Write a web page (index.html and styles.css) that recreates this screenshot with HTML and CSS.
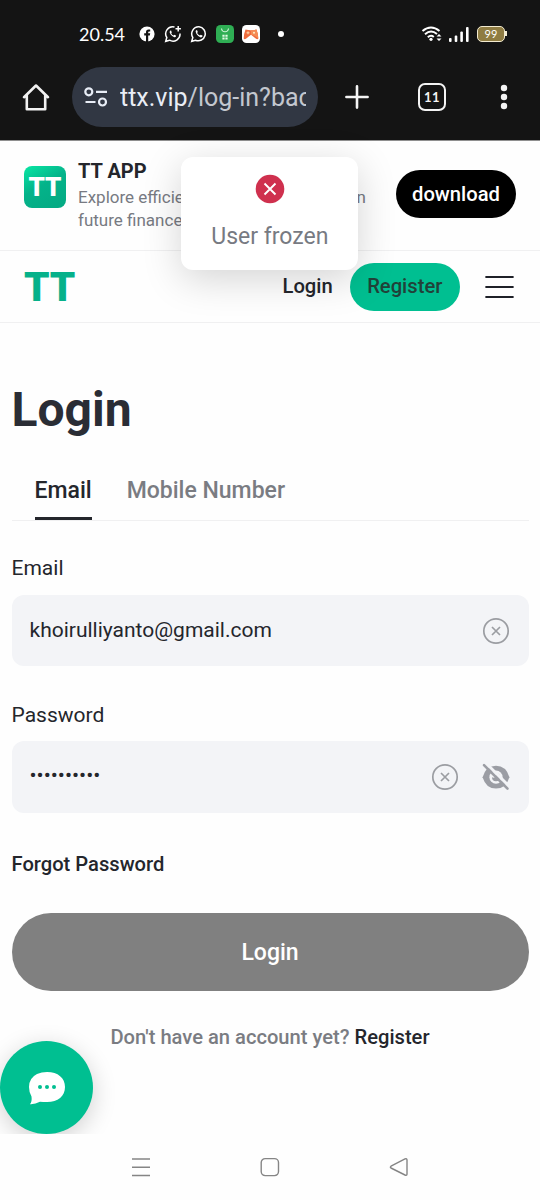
FILE: index.html
```html
<!DOCTYPE html>
<html lang="en">
<head>
<meta charset="utf-8">
<title>Login</title>
<link rel="stylesheet" href="styles.css">
</head>
<body>
<div class="phone">
  <div class="chrome">
    <div class="status">
      <span class="time">20.54</span>
      <span class="cell"><svg width="16" height="16" viewBox="0 0 16 16"><circle cx="8" cy="8" r="7.600" fill="#fff"/><path d="M7 16V9.600H5.200V7.200H7V6Q7 3.400 9.500 3.400H11.200V5.600H10Q9.200 5.600 9.200 6.400V7.200H11.200L10.800 9.600H9.200V16Z" fill="#141414"/></svg></span>
      <span class="cell"><svg width="18" height="18" viewBox="0 0 18 18" fill="none" stroke="#fff" stroke-width="1.500"><path d="M10.500 2A7 7 0 0 0 2.800 12.500L1.700 16.300 5.500 15.200A7 7 0 0 0 16 8.500"/><path d="M14.200 1v5.400M11.500 3.700h5.400"/><path d="M6 5.700Q5 7 6.500 9.200T10.300 12.300Q11.800 12.300 12.200 10.800L10.400 9.800 9.500 10.600Q8 10 7.200 8.200L7.800 7.400 7.100 5.600Z" fill="#fff" stroke="none"/></svg></span>
      <span class="cell"><svg width="18" height="18" viewBox="0 0 18 18" fill="none" stroke="#fff" stroke-width="1.500"><path d="M9 1.800A7 7 0 0 0 2.800 12.500L1.700 16.300 5.500 15.200A7 7 0 1 0 9 1.800Z"/><path d="M6 5.200Q5 6.500 6.500 9T10.800 12.500Q12.400 12.300 12.700 10.700L10.800 9.700 9.900 10.600Q8 9.800 7.100 7.900L7.800 7.100 7.100 5.200Z" fill="#fff" stroke="none"/></svg></span>
      <span class="cell"><svg width="18" height="18" viewBox="0 0 18 18"><rect width="18" height="18" rx="4.500" fill="#2fae54"/><path d="M5.500 3.500Q6 6.800 9 6.800T12.500 3.500" fill="none" stroke="#d9f6df" stroke-width="1.100"/><path d="M6.400 9.800h2.200v2H6.400zM9.400 9.800h2.200v2H9.400zM6.400 12.600h2.200v2H6.400zM9.400 12.600h2.200v2H9.400z" fill="#e2fae5"/></svg></span>
      <span class="cell"><svg width="18" height="18" viewBox="0 0 18 18"><rect width="18" height="18" rx="4.500" fill="#fff"/><path d="M3.500 4.500Q9 6 14.500 4.500 16 8 16.300 13.500 15.300 15.300 12.500 12.500L9 9.800 5.500 12.500Q2.700 15.300 1.700 13.500 2 8 3.500 4.500Z" fill="#ef6b3c"/><path d="M9 5.300Q12 5.300 14.500 4.500 16 8 16.300 13.500 14 11 9 9.800Z" fill="#f58b54"/><path d="M4.500 7.800h3M6 6.300v3" stroke="#ffd7a8"/><circle cx="12" cy="7.800" r="1" fill="#fff0c9"/></svg></span>
      <span class="cell dot"><i></i></span>
      <span class="signals">
        <svg width="22" height="18" viewBox="0 0 22 18" fill="none" stroke="#fff" stroke-width="2"><path d="M1.500 6Q10 -1 18.500 6M4 9.200Q10 4 16 9M6.800 12.200Q10 9.500 12.800 12"/><circle cx="10" cy="14.300" r="1.600" fill="#fff" stroke="none"/><path d="M15.500 11.500L18 9l2.500 2.500zM15.500 13.500L18 16l2.500-2.500z" fill="#fff" stroke="none"/></svg>
        <svg width="20" height="16" viewBox="0 0 20 16" fill="#fff"><rect y="12" width="2.600" height="4" rx="1"/><rect x="5.700" y="9.500" width="2.600" height="6.500" rx="1"/><rect x="11.300" y="5.500" width="2.600" height="10.500" rx="1"/><rect x="17" y="1" width="2.600" height="15" rx="1"/></svg>
        <span class="battery">99</span>
      </span>
    </div>
    <div class="toolbar">
      <svg class="home" width="28" height="28" viewBox="0 0 28 28" fill="none" stroke="#f2f2f2" stroke-width="2.600" stroke-linejoin="round" stroke-linecap="round"><path d="M2 14.200L14 2.500 26 14.200M4.800 12.500V26.300H23.200V12.500"/></svg>
      <div class="url">
        <svg width="24" height="20" viewBox="0 0 24 20" fill="none" stroke="#e8edf6" stroke-width="2.200"><circle cx="4.800" cy="4.800" r="3.500"/><path d="M12 4.800h11M1.500 15h10"/><circle cx="18.500" cy="15" r="3.500"/></svg>
        <div class="url-text"><b>ttx.vip</b>/log-in?bac</div>
      </div>
      <svg class="plus" width="24" height="24" viewBox="0 0 24 24" stroke="#f4f4f4" stroke-width="2.600" stroke-linecap="round"><path d="M12 1.400v21.200M1.400 12h21.200"/></svg>
      <span class="tabcount">11</span>
      <svg class="more" width="8" height="26" viewBox="0 0 8 26" fill="#f4f4f4"><circle cx="4" cy="4" r="3.200"/><circle cx="4" cy="13" r="3.200"/><circle cx="4" cy="22" r="3.200"/></svg>
    </div>
  </div>

  <div class="banner">
    <div class="appicon"><span>TT</span></div>
    <div class="appcopy">
      <div class="appname">TT APP</div>
      <div class="appdesc"><span>Explore efficient crypto trading</span><span>in</span></div>
      <div class="appdesc">future finance</div>
    </div>
    <div class="download">download</div>
  </div>

  <div class="nav">
    <div class="logo">TT</div>
    <div class="navlogin">Login</div>
    <div class="navregister">Register</div>
    <svg width="29" height="24" viewBox="0 0 29 24" stroke="#1f2128" stroke-width="2.200" stroke-linecap="round"><path d="M1.200 2h26.600M1.200 12h26.600M1.200 22h26.600"/></svg>
  </div>

  <div class="page">
    <h1>Login</h1>
    <div class="tabs"><div class="tab active">Email</div><div class="tab">Mobile Number</div></div>
    <div class="label">Email</div>
    <div class="field">
      <div class="value">khoirulliyanto@gmail.com</div>
      <svg width="28" height="28" viewBox="0 0 28 28" fill="none" stroke="#9b9da2" stroke-width="1.700"><circle cx="14" cy="14" r="12.200"/><path d="M10 10l8 8M18 10l-8 8"/></svg>
    </div>
    <div class="label second">Password</div>
    <div class="field">
      <div class="value dots">••••••••••</div>
      <svg width="28" height="28" viewBox="0 0 28 28" fill="none" stroke="#9b9da2" stroke-width="1.700"><circle cx="14" cy="14" r="12.200"/><path d="M10 10l8 8M18 10l-8 8"/></svg>
      <svg class="eye" width="28" height="28" viewBox="0 0 28 28"><path d="M.600 14.200Q4 2.800 14 2.800T27.400 14.200Q24 25.600 14 25.600T.600 14.200Z" fill="#9b9da4"/><circle cx="14" cy="14.200" r="6.600" fill="#f3f4f7"/><path d="M14 10.200a4 4 0 1 1-4 4q2 1 3.200-.200T14 10.200Z" fill="#9b9da4"/><path d="M3.800 0L28 24.200" stroke="#f3f4f7" stroke-width="3"/><path d="M2 2.200L25.500 25.700" stroke="#9b9da4" stroke-width="2.600" stroke-linecap="round"/></svg>
    </div>
    <div class="forgot">Forgot Password</div>
    <div class="submit">Login</div>
    <div class="signup">Don't have an account yet? <b>Register</b></div>
  </div>

  <div class="sysnav">
    <svg width="20" height="20" viewBox="0 0 20 20" stroke="#858585" stroke-width="1.500"><path d="M1 2h18M1 10.200h18M1 18.500h18"/></svg>
    <svg width="20" height="20" viewBox="0 0 20 20" fill="none" stroke="#858585" stroke-width="1.400"><rect x="1.200" y="1.600" width="17.300" height="17" rx="4"/></svg>
    <svg width="20" height="20" viewBox="0 0 20 20" fill="none" stroke="#858585" stroke-width="1.400" stroke-linejoin="round"><path d="M2 9.200L16 1.900Q18 1.200 18 3V17Q18 18.900 16 18L2 11Q.800 10.200 2 9.200Z"/></svg>
  </div>

  <div class="chatclip"><div class="chat"><svg width="38" height="34" viewBox="0 0 38 34"><path d="M19 1C30 1 37 7 37 16S30 31 19 31Q15 31 12 30.800 7 33.500 2 33.200 4.200 30.500 3.500 25.500 1 21.500 1 16 1 7 9 3Q13.500 1 19 1Z" fill="#fff"/><g fill="#00bf91"><circle cx="12" cy="16" r="2"/><circle cx="19" cy="16" r="2"/><circle cx="26" cy="16" r="2"/></g></svg></div></div>

  <div class="toast">
    <svg width="30" height="30" viewBox="0 0 30 30"><circle cx="15" cy="15" r="14.300" fill="#cf304e"/><path d="M9.500 9.500l11 11M20.500 9.500L9.500 20.500" stroke="#fff" stroke-width="1.900"/></svg>
    <div>User frozen</div>
  </div>
</div>
</body>
</html>
```
FILE: styles.css
```css
* { box-sizing: border-box; }
body { margin: 0; font-family: Roboto, sans-serif; color: #24262c; background: #fff; }
svg { display: block; flex: none; }
.phone { position: relative; width: 540px; height: 1200px; overflow: hidden; display: flex; flex-direction: column; background: #fefefe; }
.phone > * { flex: none; }

.chrome { height: 141px; background: #141414; border-bottom: 1px solid #8f8f8f; }
.status { display: flex; align-items: center; height: 67px; padding: 1px 35px 0 79px; }
.time { width: 55px; color: #fff; font: 18px/20px Lato, sans-serif; }
.cell { width: 26px; display: flex; justify-content: center; }
.dot { width: 34px; }
.dot i { width: 6px; height: 6px; border-radius: 50%; background: #fff; }
.signals { margin-left: auto; display: flex; align-items: center; gap: 6px; }
.battery { position: relative; width: 28px; height: 16px; margin: 0 0 0 2px; border: 1.500px solid #f3ebd0; border-radius: 5px; background: #8f7c42; color: #fff; font: 11px/13px Lato, sans-serif; text-align: center; }
.battery::after { content: ""; position: absolute; left: 27px; top: 4px; width: 2px; height: 5px; background: #f3ebd0; }

.toolbar { display: flex; align-items: center; height: 60px; }
.home { margin: 0 22px; }
.url { display: flex; align-items: center; gap: 12px; width: 246px; height: 60px; padding: 0 12px; border-radius: 30px; background: #313743; }
.url-text { flex: 1; overflow: hidden; white-space: nowrap; color: #c3c7cf; font-size: 25px; line-height: 34px; padding-top: 2px; }
.url-text b { font-weight: 400; color: #e9edf5; }
.plus { margin-left: 27px; }
.tabcount { width: 28px; height: 28px; margin-left: 49px; border: 2.500px solid #f4f4f4; border-radius: 7px; color: #f4f4f4; font: 700 13px/24px Lato, sans-serif; letter-spacing: .5px; text-align: center; }
.more { margin-left: 54px; }

.banner { display: flex; height: 110px; padding: 0 24px; border-bottom: 1px solid #f0f0f1; }
.appicon { width: 42px; height: 42px; margin-top: 25px; border-radius: 8px; background: linear-gradient(150deg, #08e7a4, #04b38a 45%, #04a982); color: #fff; text-align: center; font-size: 26px; font-weight: 900; line-height: 43px; }
.appcopy { width: 288px; margin: 17px 0 0 12px; }
.appname { font-size: 20px; font-weight: 700; line-height: 27px; }
.appdesc { display: flex; justify-content: space-between; color: #777a82; font-size: 17px; line-height: 23px; padding-top: 1px; margin-bottom: -1px; white-space: nowrap; }
.download { flex: none; width: 120px; height: 48px; margin: 29px 0 0 30px; border-radius: 24px; background: #000; color: #fff; font-size: 20.200px; font-weight: 500; line-height: 48px; text-align: center; }

.nav { display: flex; align-items: center; height: 72px; padding: 0 26px 0 24px; border-bottom: 1px solid #f0f0f1; }
.logo { width: 258.500px; color: #06b18a; font-size: 40.500px; font-weight: 900; line-height: 40px; }
.navlogin { width: 67.500px; margin-top: -1px; font-size: 20.200px; font-weight: 500; }
.navregister { width: 109.500px; height: 48px; border-radius: 24px; background: #00bf91; color: #214239; font-size: 20.200px; font-weight: 500; line-height: 47px; text-align: center; }
.nav svg { margin-left: auto; }

.page { height: 811px; padding: 0 11.500px; }
h1 { margin: 58px 0 0; color: #2a2d35; font-size: 48px; font-weight: 700; line-height: 58px; }
.tabs { display: flex; gap: 35px; height: 60px; margin-top: 22px; padding-left: 23px; border-bottom: 1px solid #f0f0f1; }
.tab { height: 59px; padding-top: 15px; color: #7a7c82; font-size: 23px; font-weight: 500; line-height: 30px; border-bottom: 0 solid #24262c; }
.active { color: #24262c; border-bottom-width: 3px; }
.label { margin-top: 33px; font-size: 21px; line-height: 28px; }
.field { display: flex; align-items: center; height: 71.500px; margin-top: 12.500px; padding: 1px 19px 0 18px; border-radius: 12px; background: #f3f4f7; }
.value { flex: 1; margin-top: -2px; font-size: 21px; line-height: 28px; }
.dots { margin-top: -4px; }
.second { margin-top: 34.500px; }
.eye { margin-left: 23px; }
.forgot { margin-top: 37px; font-size: 20.150px; font-weight: 500; line-height: 28px; }
.submit { height: 78px; margin-top: 35px; border-radius: 39px; background: #808080; color: #fff; font-size: 23px; font-weight: 500; line-height: 79px; text-align: center; }
.signup { margin-top: 32px; color: #7a7c82; font-size: 20.150px; font-weight: 500; line-height: 28px; text-align: center; }
.signup b { color: #24262c; font-weight: 500; }

.sysnav { display: flex; align-items: center; height: 66px; padding-left: 131px; gap: 109px; }

.chatclip { position: absolute; left: 0; top: 1000px; width: 140px; height: 134px; overflow: hidden; }
.chat { display: flex; align-items: center; justify-content: center; width: 93px; height: 93px; margin-top: 41px; border-radius: 50%; background: #00bf91; box-shadow: 0 6px 24px rgba(0,0,0,.18); }
.toast { position: absolute; left: 181.400px; top: 157px; width: 177px; height: 113px; display: flex; flex-direction: column; align-items: center; padding-top: 17px; border-radius: 12px; background: #fff; box-shadow: 0 9px 38px rgba(0,0,0,.17); color: #777a82; font-size: 23px; line-height: 30px; }
.toast div { margin-top: 18px; white-space: nowrap; }
```
